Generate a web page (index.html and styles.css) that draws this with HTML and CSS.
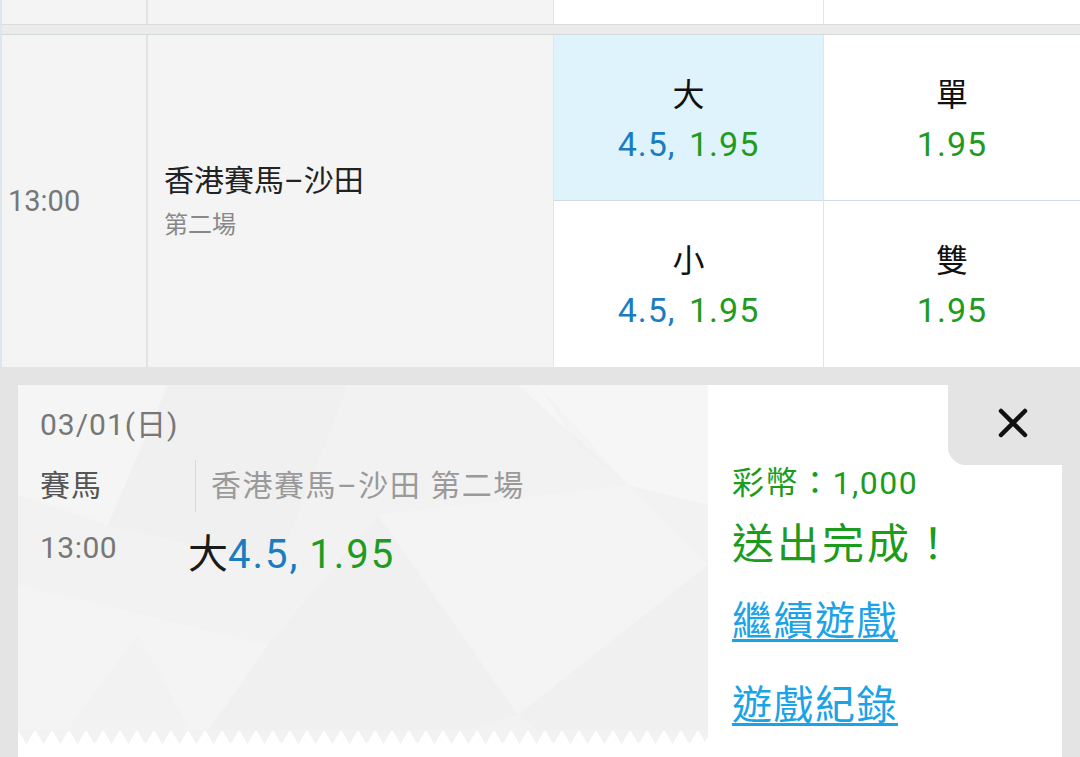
FILE: index.html
```html
<!DOCTYPE html>
<html lang="zh-Hant">
<head>
<meta charset="utf-8">
<title>賽馬</title>
<link rel="stylesheet" href="styles.css">
</head>
<body>
<div class="page">
  <div class="table">
    <div class="row row-prev">
      <div class="c c-time"></div>
      <div class="c c-name"></div>
      <div class="c c-odd"></div>
      <div class="c c-odd"></div>
    </div>
    <div class="sep"></div>
    <div class="row row-main">
      <div class="c c-time"><span class="time">13:00</span></div>
      <div class="c c-name">
        <div class="event">香港賽馬–沙田</div>
        <div class="race">第二場</div>
      </div>
      <div class="odds">
        <div class="cell sel bt">
          <div class="lbl">大</div>
          <div class="num"><span class="blue">4.5,</span> <span class="green">1.95</span></div>
        </div>
        <div class="cell bt bl">
          <div class="lbl">單</div>
          <div class="num"><span class="green">1.95</span></div>
        </div>
        <div class="cell">
          <div class="lbl">小</div>
          <div class="num"><span class="blue">4.5,</span> <span class="green">1.95</span></div>
        </div>
        <div class="cell bl">
          <div class="lbl">雙</div>
          <div class="num"><span class="green">1.95</span></div>
        </div>
      </div>
    </div>
  </div>

  <div class="ticket-wrap">
    <div class="ticket">
      <div class="slip">
        <svg class="texture" width="690" height="360" viewBox="0 0 690 360" aria-hidden="true">
          <polygon points="0,0 150,0 90,140 0,110" fill="#ffffff" opacity="0.25"/>
          <polygon points="150,0 330,0 260,180 90,140" fill="#ececec" opacity="0.2"/>
          <polygon points="500,0 690,0 690,120 610,100" fill="#ffffff" opacity="0.3"/>
          <polygon points="520,0 610,100 560,60" fill="#ebebeb" opacity="0.3"/>
          <polygon points="0,200 250,260 180,360 0,360" fill="#ffffff" opacity="0.2"/>
          <polygon points="250,260 360,130 500,330 400,360 180,360" fill="#ededed" opacity="0.2"/>
          <polygon points="360,130 610,100 690,180 500,330" fill="#ffffff" opacity="0.2"/>
          <polygon points="500,330 690,180 690,360 540,360" fill="#ededed" opacity="0.25"/>
          <polygon points="60,330 120,250 180,360 40,360" fill="#ececec" opacity="0.25"/>
        </svg>
        <div class="slip-body">
          <div class="date">03/01(日)</div>
          <div class="slip-row">
            <div class="sport">賽馬</div>
            <div class="match">香港賽馬–沙田 第二場</div>
          </div>
          <div class="slip-row bet-row">
            <div class="slip-time">13:00</div>
            <div class="bet"><span class="dark">大</span><span class="blue">4.5,</span> <span class="green">1.95</span></div>
          </div>
        </div>
        <div class="zigzag"></div>
      </div>
      <div class="result">
        <div class="coins">彩幣：1,000</div>
        <div class="done">送出完成！</div>
        <a class="link first" href="#">繼續遊戲</a>
        <a class="link" href="#">遊戲紀錄</a>
      </div>
      <div class="close">
        <svg width="30" height="30" viewBox="0 0 30 30" aria-hidden="true">
          <path d="M3 3 L27 27 M27 3 L3 27" stroke="#111" stroke-width="4.5" stroke-linecap="round"/>
        </svg>
      </div>
    </div>
  </div>
</div>
</body>
</html>
```

FILE: styles.css
```css
html, body {
  margin: 0;
  padding: 0;
}
body {
  width: 1080px;
  height: 757px;
  overflow: hidden;
  background: #e4e4e4;
  font-family: Roboto, "Noto Sans CJK TC", sans-serif;
  color: #222;
}
.page {
  width: 1080px;
  height: 757px;
  display: flex;
  flex-direction: column;
}
.table {
  border-left: 2px solid #dde6ec;
  background: #fff;
}
.row {
  display: grid;
  grid-template-columns: 144px 407px 270px 257px;
}
.row-prev {
  height: 24px;
  border-bottom: 1px solid #d9dcdf;
}
.c-time, .c-name {
  background: #f4f4f4;
}
.c-name {
  border-left: 2px solid #e3e3e3;
}
.c-odd {
  background: #fff;
  border-left: 1px solid #e3e6e8;
}
.sep {
  height: 9px;
  background: #ebebeb;
  border-bottom: 1px solid #d3dade;
}
.row-main {
  height: 332px;
}
.row-main .c-time {
  display: flex;
  align-items: center;
  padding-left: 6px;
}
.time {
  font-size: 29px;
  color: #777;
  line-height: 40px;
}
.row-main .c-name {
  display: flex;
  flex-direction: column;
  justify-content: center;
  padding-left: 16px;
}
.event {
  font-size: 30px;
  line-height: 40px;
  color: #222;
}
.race {
  font-size: 24px;
  line-height: 32px;
  margin-top: 8px;
  color: #888;
}
.odds {
  grid-column: 3 / 5;
  display: grid;
  grid-template-columns: 270px 257px;
  grid-template-rows: 166px 166px;
}
.cell {
  background: #fff;
  display: flex;
  flex-direction: column;
  align-items: center;
  padding-top: 36px;
  box-sizing: border-box;
  border-left: 1px solid #e1e5e8;
}
.cell.sel {
  background: #dff3fc;
}
.cell.bt {
  border-bottom: 1px solid #d3dce2;
}
.lbl {
  font-size: 32px;
  line-height: 48px;
  color: #111;
}
.num {
  font-size: 34px;
  line-height: 50px;
  letter-spacing: 1px;
  word-spacing: 4px;
}
.blue { color: #1b7cc2; }
.green { color: #1f9b22; }
.dark { color: #1a1a1a; }

.ticket-wrap {
  padding: 18px 0 0 18px;
}
.ticket {
  position: relative;
  width: 1044px;
  height: 372px;
  background: #fff;
  display: flex;
}
.slip {
  position: relative;
  width: 690px;
  height: 359px;
  background: #f2f2f2;
  display: flex;
  flex-direction: column;
  border-bottom-right-radius: 10px;
  overflow: hidden;
}
.texture {
  position: absolute;
  left: 0;
  top: 0;
}
.slip-body {
  position: relative;
  flex: 1;
  padding: 20px 0 0 22px;
}
.date {
  font-size: 30px;
  line-height: 40px;
  color: #777;
  letter-spacing: 1px;
}
.slip-row {
  display: flex;
  margin-top: 15px;
}
.sport {
  width: 155px;
  font-size: 30px;
  line-height: 52px;
  color: #555;
  letter-spacing: 1px;
}
.match {
  border-left: 1px solid #d9d9d9;
  padding-left: 15px;
  font-size: 30px;
  line-height: 52px;
  color: #9a9a9a;
  letter-spacing: 1.5px;
}
.bet-row {
  margin-top: 13px;
  align-items: flex-start;
}
.slip-time {
  width: 148px;
  font-size: 30px;
  line-height: 46px;
  color: #777;
  letter-spacing: 0.5px;
}
.bet {
  font-size: 40px;
  line-height: 60px;
}
.bet .blue, .bet .green {
  letter-spacing: 2px;
}
.zigzag {
  position: relative;
  height: 14px;
  background: conic-gradient(from -31deg at 50% 100%, #f2f2f2 62deg, #ffffff 0) 0 0 / 17px 14px repeat-x;
}
.result {
  flex: 1;
  padding: 78px 0 0 24px;
  display: flex;
  flex-direction: column;
  align-items: flex-start;
}
.coins {
  font-size: 32px;
  line-height: 40px;
  color: #1c9c1c;
  letter-spacing: 1.5px;
}
.done {
  margin-top: 17px;
  font-size: 42px;
  line-height: 50px;
  color: #1c9c1c;
  letter-spacing: 3px;
}
.link {
  font-size: 40px;
  line-height: 48px;
  color: #1ba3e8;
  text-decoration: underline;
  text-decoration-thickness: 3px;
  text-underline-offset: 4px;
  letter-spacing: 1.5px;
}
.link.first {
  margin-top: 28px;
}
.link + .link {
  margin-top: 36px;
}
.close {
  position: absolute;
  top: 0;
  right: -18px;
  width: 132px;
  height: 80px;
  background: #e4e4e4;
  border-bottom-left-radius: 18px;
  display: flex;
  align-items: center;
  justify-content: center;
  box-sizing: border-box;
  padding: 0 18px 4px 16px;
}
```
